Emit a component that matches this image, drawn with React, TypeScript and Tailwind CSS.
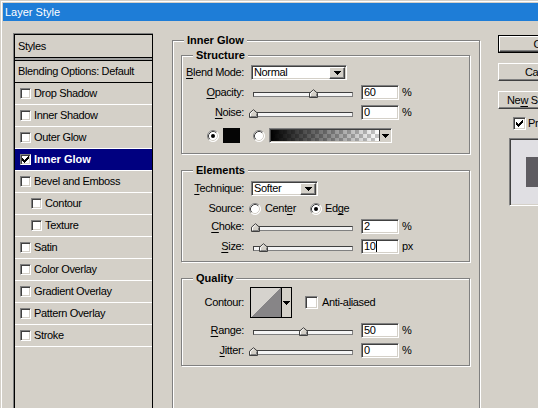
import React from "react";

const sunken =
  "border border-t-[#808080] border-l-[#808080] border-r-white border-b-white shadow-[inset_1px_1px_0_#404040,inset_-1px_-1px_0_#d4d0c8]";
const raised =
  "bg-[#d4d0c8] border border-t-white border-l-white border-r-[#404040] border-b-[#404040] shadow-[inset_-1px_-1px_0_#808080]";

function U({ children }: { children: React.ReactNode }) {
  return <span className="underline decoration-1 underline-offset-[2px]">{children}</span>;
}

function Arrow() {
  return (
    <svg width="7" height="4" viewBox="0 0 7 4" shapeRendering="crispEdges">
      <path d="M0 0h7v1H0zM1 1h5v1H1zM2 2h3v1H2zM3 3h1v1H3z" fill="#000" />
    </svg>
  );
}

function CheckMark() {
  return (
    <svg width="7" height="7" viewBox="0 0 7 7" shapeRendering="crispEdges">
      <path
        d="M6 0h1v1H6zM5 1h2v1H5zM0 2h1v1H0zM4 2h3v1H4zM0 3h2v1H0zM3 3h3v1H3zM0 4h5v1H0zM1 5h3v1H1zM2 6h1v1H2z"
        fill="#000"
      />
    </svg>
  );
}

function CheckBox({ checked = false, small = false }: { checked?: boolean; small?: boolean }) {
  return (
    <div
      className={`${sunken} bg-white shrink-0 flex items-center justify-center ${
        small ? "w-[11px] h-[11px]" : "w-[13px] h-[13px]"
      }`}
    >
      {checked && <CheckMark />}
    </div>
  );
}

function Radio({ checked = false }: { checked?: boolean }) {
  return (
    <svg width="12" height="12" viewBox="0 0 12 12" className="shrink-0">
      <circle cx="6" cy="6" r="5.5" fill="#fff" />
      <path d="M2.11 9.89 A5.5 5.5 0 0 1 9.89 2.11" stroke="#808080" fill="none" />
      <path d="M9.89 2.11 A5.5 5.5 0 0 1 2.11 9.89" stroke="#ffffff" fill="none" />
      <path d="M2.82 9.18 A4.5 4.5 0 0 1 9.18 2.82" stroke="#404040" fill="none" />
      <path d="M9.18 2.82 A4.5 4.5 0 0 1 2.82 9.18" stroke="#d4d0c8" fill="none" />
      {checked && <circle cx="6" cy="6" r="2" fill="#000" />}
    </svg>
  );
}

function Row({ children, className = "" }: { children: React.ReactNode; className?: string }) {
  return <div className={`flex items-center h-[15px] ${className}`}>{children}</div>;
}

function Label({ children }: { children: React.ReactNode }) {
  return <div className="w-[62px] shrink-0 text-right whitespace-nowrap">{children}</div>;
}

function Thumb({ value }: { value: number }) {
  return (
    <svg
      width="9"
      height="9"
      viewBox="0 0 9 9"
      className="absolute top-[4px]"
      style={{ left: value - 4 }}
    >
      <path d="M0.5 8.5 V4.2 L4.5 0.7 L8.5 4.2 V8.5 Z" fill="#d4d0c8" stroke="#404040" />
      <path d="M1.5 7.5 V4.6 L4.5 2" stroke="#ffffff" fill="none" />
      <path d="M1.5 7.5 H7.5 V4.6" stroke="#808080" fill="none" />
    </svg>
  );
}

function Slider({ value }: { value: number }) {
  return (
    <div className="relative ml-[9px] w-[100px] h-[15px] shrink-0 pt-[7px]">
      <div className="h-[5px] border border-[#404040] border-b-[#808080] border-r-[#808080] bg-[#f4f4f4]" />
      <Thumb value={value} />
    </div>
  );
}

function NumInput({ value, caret = false }: { value: string; caret?: boolean }) {
  return (
    <div className={`${sunken} bg-white ml-[8px] w-[38px] h-[15px] flex items-center pl-[2px] shrink-0`}>
      <span>{value}</span>
      {caret && <span className="w-px h-[11px] bg-black" />}
    </div>
  );
}

function SliderRow({
  label,
  value,
  unit,
  className = "",
  caret = false,
}: {
  label: React.ReactNode;
  value: number;
  unit: string;
  className?: string;
  caret?: boolean;
}) {
  return (
    <Row className={className}>
      <Label>{label}</Label>
      <Slider value={value} />
      <NumInput value={String(value)} caret={caret} />
      <span className="ml-[3px]">{unit}</span>
    </Row>
  );
}

function Select({ value, className }: { value: string; className: string }) {
  return (
    <div className={`${sunken} bg-white h-[15px] flex items-center pl-[2px] shrink-0 ${className}`}>
      <span className="flex-1">{value}</span>
      <div className={`${raised} w-[16px] h-[12px] mr-[1px] flex items-center justify-center`}>
        <Arrow />
      </div>
    </div>
  );
}

function Group({
  title,
  className,
  children,
}: {
  title: string;
  className: string;
  children: React.ReactNode;
}) {
  return (
    <fieldset
      className={`border border-[#808080] shadow-[inset_1px_1px_0_#fff,1px_1px_0_#fff] shrink-0 ${className}`}
    >
      <legend className="ml-[11px] px-[3px] font-bold tracking-normal leading-[13px] bg-[#d4d0c8]">
        {title}
      </legend>
      {children}
    </fieldset>
  );
}

function ListItem({
  label,
  indent = false,
  selected = false,
}: {
  label: string;
  indent?: boolean;
  selected?: boolean;
}) {
  return (
    <div
      className={`h-[22px] border-b border-white flex items-center ${indent ? "pl-[16px]" : "pl-[5px]"} ${
        selected ? "bg-[#000080] text-white font-bold tracking-normal" : ""
      }`}
    >
      <CheckBox small checked={selected} />
      <span className="ml-[3px] whitespace-nowrap">{label}</span>
    </div>
  );
}

export default function App() {
  return (
    <div className="w-[538px] h-[408px] overflow-hidden bg-[#d4d0c8] text-black text-[11px] leading-[13px] tracking-[-0.35px] font-['Liberation_Sans',Arial,sans-serif] shadow-[inset_1px_1px_0_#d4d0c8,inset_2px_2px_0_#fff]">
      <div className="ml-[3px] mt-[3px] h-[18px] bg-[#1e7dd7] text-white pl-[2px] flex items-center tracking-normal">
        Layer Style
      </div>
      <div className="flex items-start">
        {/* Styles list */}
        <div className="ml-[13px] mt-[12px] w-[140px] h-[420px] shrink-0 border-l border-t border-[#808080]">
          <div className="h-full border border-black">
            <div className="h-[23px] pl-[3px] flex items-center border-b border-black">Styles</div>
            <div className="h-[2px] bg-[#a0a0a0]" />
            <div className="h-[23px] pl-[3px] flex items-center border-t border-b border-black whitespace-nowrap">
              Blending Options: Default
            </div>
            <ListItem label="Drop Shadow" />
            <ListItem label="Inner Shadow" />
            <ListItem label="Outer Glow" />
            <ListItem label="Inner Glow" selected />
            <ListItem label="Bevel and Emboss" />
            <ListItem label="Contour" indent />
            <ListItem label="Texture" indent />
            <ListItem label="Satin" />
            <ListItem label="Color Overlay" />
            <ListItem label="Gradient Overlay" />
            <ListItem label="Pattern Overlay" />
            <ListItem label="Stroke" />
          </div>
        </div>

        {/* Main panel */}
        <Group title="Inner Glow" className="ml-[19px] mt-[13px] w-[308px] h-[420px]">
          <Group title="Structure" className="ml-[8px] mt-[2px] w-[289px] pb-[10px]">
            <Row className="mt-[3px]">
              <Label>
                <U>B</U>lend Mode:
              </Label>
              <Select value="Normal" className="ml-[7px] w-[96px]" />
            </Row>
            <SliderRow
              className="mt-[5px]"
              label={
                <>
                  <U>O</U>pacity:
                </>
              }
              value={60}
              unit="%"
            />
            <SliderRow
              className="mt-[5px]"
              label={
                <>
                  <U>N</U>oise:
                </>
              }
              value={0}
              unit="%"
            />
            <Row className="mt-[8px] pl-[25px]">
              <Radio checked />
              <div className="ml-[4px] w-[17px] h-[15px] bg-[#050505] shrink-0" />
              <div className="ml-[13px]">
                <Radio />
              </div>
              <div className={`${sunken} ml-[4px] w-[123px] h-[15px] p-[1px] flex shrink-0`}>
                <div className="flex-1 [background:linear-gradient(to_right,#000,rgba(0,0,0,0)),repeating-conic-gradient(#c8c8c8_0_25%,#ffffff_0_50%)_0_0/8px_8px]" />
                <div className="w-[11px] border-l border-[#404040] bg-[#d4d0c8] flex items-center justify-center">
                  <Arrow />
                </div>
              </div>
            </Row>
          </Group>

          <Group title="Elements" className="ml-[8px] mt-[10px] w-[289px] pb-[7px]">
            <Row className="mt-[4px]">
              <Label>
                <U>T</U>echnique:
              </Label>
              <Select value="Softer" className="ml-[7px] w-[67px]" />
            </Row>
            <Row className="mt-[5px]">
              <Label>Source:</Label>
              <div className="ml-[5px] w-[61px] flex items-center shrink-0">
                <Radio />
                <span className="ml-[4px]">
                  Cent<U>e</U>r
                </span>
              </div>
              <Radio checked />
              <span className="ml-[3px]">
                Ed<U>g</U>e
              </span>
            </Row>
            <SliderRow
              className="mt-[3px]"
              label={
                <>
                  <U>C</U>hoke:
                </>
              }
              value={2}
              unit="%"
            />
            <SliderRow
              className="mt-[5px]"
              label={
                <>
                  <U>S</U>ize:
                </>
              }
              value={10}
              unit="px"
              caret
            />
          </Group>

          <Group title="Quality" className="ml-[8px] mt-[10px] w-[289px] pb-[7px]">
            <div className="mt-[2px] h-[31px] flex items-center">
              <Label>Contour:</Label>
              <div className="ml-[6px] w-[42px] h-[31px] border border-black flex shrink-0">
                <svg width="30" height="29" viewBox="0 0 30 29" shapeRendering="crispEdges">
                  <rect width="30" height="29" fill="#d6d3ce" />
                  <polygon points="0,29 30,0 30,29" fill="#878587" />
                </svg>
                <div className="flex-1 border-l border-black bg-[#d4d0c8] flex items-center justify-center">
                  <Arrow />
                </div>
              </div>
              <div className="ml-[13px]">
                <CheckBox />
              </div>
              <span className="ml-[4px] whitespace-nowrap">
                Anti-a<U>l</U>iased
              </span>
            </div>
            <SliderRow
              className="mt-[5px]"
              label={
                <>
                  <U>R</U>ange:
                </>
              }
              value={50}
              unit="%"
            />
            <SliderRow
              className="mt-[5px]"
              label={
                <>
                  <U>J</U>itter:
                </>
              }
              value={0}
              unit="%"
            />
          </Group>
        </Group>

        {/* Right column */}
        <div className="ml-[18px] mt-[14px] w-[90px] shrink-0 flex flex-col">
          <div className="w-[86px] h-[18px] border border-black">
            <div className={`${raised} h-full flex items-center justify-center`}>OK</div>
          </div>
          <div className={`${raised} mt-[10px] w-[86px] h-[18px] flex items-center justify-center`}>Cancel</div>
          <div className={`${raised} mt-[10px] w-[86px] h-[18px] flex items-center pl-[8px] whitespace-nowrap`}>
            <span>
              Ne<U>w</U> Style...
            </span>
          </div>
          <div className="mt-[8px] ml-[15px] h-[13px] flex items-center">
            <CheckBox checked />
            <span className="ml-[2px]">Preview</span>
          </div>
          <div className={`${sunken} bg-[#e0dfe3] mt-[8px] ml-[11px] w-[64px] h-[68px] flex items-center justify-center`}>
            <div className="w-[30px] h-[30px] bg-[#5e5c61]" />
          </div>
        </div>
      </div>
    </div>
  );
}
